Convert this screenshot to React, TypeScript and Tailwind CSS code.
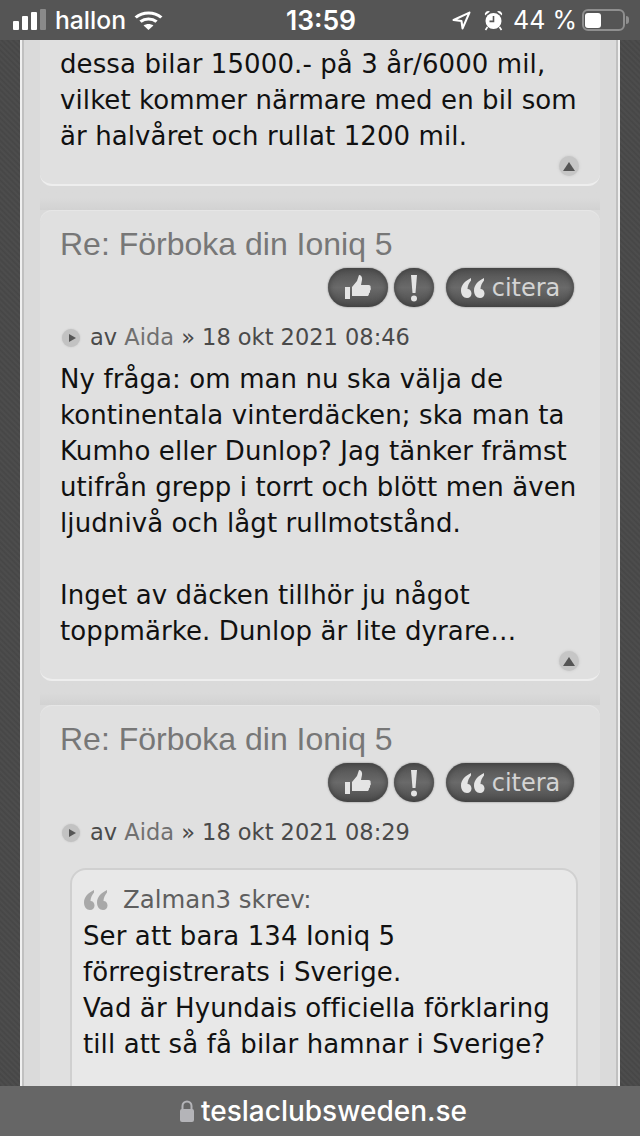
const body = "font-['DejaVu_Sans',sans-serif]";

function SignalBars() {
  return (
    <div className="flex items-end gap-[3px]">
      <span className="h-[9px] w-[6px] rounded-[1px] bg-white" />
      <span className="h-[14px] w-[6px] rounded-[1px] bg-white" />
      <span className="h-[18px] w-[6px] rounded-[1px] bg-white" />
      <span className="h-[21px] w-[6px] rounded-[1px] bg-[#8a8a8a]" />
    </div>
  );
}

function Wifi() {
  return (
    <svg width="29" height="20" viewBox="0 0 26 20" preserveAspectRatio="none" fill="none" stroke="white" strokeWidth="3">
      <path d="M1.5 7.5C8 1.5 18 1.5 24.5 7.5" />
      <path d="M5.8 11.6C10 8 16 8 20.2 11.6" />
      <path d="M13 20l-4.4-4.4c2.600-2 6.200-2 8.800 0z" fill="white" stroke="none" />
    </svg>
  );
}

function Location() {
  return (
    <svg width="19" height="19" viewBox="0 0 18 18" fill="none" stroke="white" strokeWidth="2" strokeLinejoin="round">
      <path d="M16.500 1.500L1.500 8.500L9 9.500L10 16.500Z" />
    </svg>
  );
}

function Alarm() {
  return (
    <svg width="19" height="22" viewBox="0 0 19 22">
      <circle cx="9.500" cy="12" r="8" fill="white" />
      <path d="M1 6.500a3.400 3.400 0 0 1 5-4zM18 6.500a3.400 3.400 0 0 0-5-4z" fill="white" />
      <path d="M9.500 7v5.400H5.500" fill="none" stroke="#555" strokeWidth="1.600" />
      <path d="M3.500 18l-2 3M15.500 18l2 3" stroke="white" strokeWidth="1.600" />
    </svg>
  );
}

function StatusBar() {
  return (
    <div className="relative z-10 grid h-10 shrink-0 grid-cols-[1fr_auto_1fr] items-center bg-[#555555] pl-[13px] pr-[11px] font-['Inter',sans-serif] text-white">
      <div className="flex items-center">
        <SignalBars />
        <span className="ml-[9px] text-[24.7px] font-medium leading-none">hallon</span>
        <span className="ml-[8px]">
          <Wifi />
        </span>
      </div>
      <span className="text-[26.5px] font-semibold leading-none">13:59</span>
      <div className="flex items-center justify-end">
        <Location />
        <span className="ml-[13px]">
          <Alarm />
        </span>
        <span className="ml-[10px] text-[25px] font-normal leading-none">44 %</span>
        <div className="ml-[5px] flex h-[22px] w-[43px] items-center rounded-[6px] border-2 border-[#8f8f8f] p-[1px]">
          <span className="h-[15px] w-[16px] rounded-[3px] bg-white" />
        </div>
        <span className="ml-[1px] h-[8px] w-[3px] rounded-r bg-[#8f8f8f]" />
      </div>
    </div>
  );
}

function UpArrow() {
  return (
    <div className="flex justify-end pr-[21px]">
      <div className="flex h-5 w-5 items-center justify-center rounded-full bg-[#c6c6c6] shadow-[0_0_3px_#c6c6c6]">
        <span className="h-0 w-0 border-x-[6px] border-b-[9px] border-x-transparent border-b-[#555555]" />
      </div>
    </div>
  );
}

function QuoteMarks({ fill }: { fill: string }) {
  return (
    <svg width="26" height="20" viewBox="0 0 26 20" fill={fill} className="blur-[0.4px]">
      <path d="M11 0C5 3 1 7 1 12.500 1 17 3.500 20 7 20c2.800 0 4.500-2 4.500-4.500S9.800 11 7.500 11c0-3 1.500-6 3.500-8.500z" />
      <path d="M24 0c-6 3-10 7-10 12.500 0 4.500 2.500 7.500 6 7.500 2.800 0 4.500-2 4.500-4.500S22.800 11 20.500 11c0-3 1.500-6 3.500-8.500z" />
    </svg>
  );
}

function PostButtons() {
  const pill =
    'flex h-[39px] items-center justify-center rounded-full bg-gradient-to-b from-[#505050] via-[#6a6a6a] to-[#4c4c4c] shadow-[inset_0_0_6px_#3a3a3a,0_0_2px_#777]';
  return (
    <div className="flex justify-end pr-[26px]">
      <div className={`${pill} w-[60px]`}>
        <svg width="28" height="28" viewBox="0 0 28 28" fill="#e4e4e4" className="blur-[0.4px]">
          <path d="M1 13h5v12H1z" />
          <path d="M8 13l5-6 2-6c2 0 3.500 2 3 5l-1 5h7.500c1.800 0 2.500 1.500 2 2.700.6 1 .4 2.300-.6 3 .4 1.100 0 2.300-1 2.800.2 1.300-.6 2.500-2 2.500H8z" />
        </svg>
      </div>
      <div className={`${pill} ml-[6px] w-[40px]`}>
        <svg width="8" height="28" viewBox="0 0 8 28" fill="#e4e4e4" className="blur-[0.4px]">
          <path d="M1 1h6l-1.500 18h-3z" />
          <circle cx="4" cy="24.500" r="3" />
        </svg>
      </div>
      <div className={`${pill} ml-3 w-[128px] gap-[6px]`}>
        <QuoteMarks fill="#e4e4e4" />
        <span className={`${body} text-[24px] font-medium leading-none text-[#d4d4d4]`}>citera</span>
      </div>
    </div>
  );
}

function PostHeader({ time }: { time: string }) {
  return (
    <>
      <h3 className="pl-5 pt-[15px] font-['Liberation_Sans',sans-serif] text-[32px] leading-[38px] text-[#777777]">
        Re: Förboka din Ioniq 5
      </h3>
      <div className="mt-[5px]">
        <PostButtons />
      </div>
      <div className="mt-[13px] flex h-9 items-center pl-[22px] text-[22.5px] text-[#4a4a4a]">
        <span className="flex h-[18px] w-[18px] items-center justify-center rounded-full bg-[#c2c2c2] shadow-[0_0_2px_#c2c2c2]">
          <span className="ml-[2px] h-0 w-0 border-y-[4px] border-l-[7px] border-y-transparent border-l-[#555555]" />
        </span>
        <span className="ml-[10px]">
          av <span className="text-[#707070]">Aida</span> » {time}
        </span>
      </div>
    </>
  );
}

function Post({ children }: { children: React.ReactNode }) {
  return (
    <article className={`${body} rounded-[12px] border-b-2 border-[#eeeeee] bg-[#e0e0e0] shadow-[inset_0_1px_0_#e6e6e6]`}>
      {children}
    </article>
  );
}

function PostGap() {
  return <div className="h-6 bg-gradient-to-b from-[#dadada] via-[#dadada] to-[#d2d2d2]" />;
}

function TextLines({ lines }: { lines: string[] }) {
  return (
    <>
      {lines.map((line, i) =>
        line === '' ? (
          <p key={i} className="h-9" />
        ) : (
          <p key={i} className="whitespace-nowrap">
            {line}
          </p>
        ),
      )}
    </>
  );
}

export default function App() {
  return (
    <div className="flex h-[1136px] w-[640px] flex-col overflow-hidden bg-[#4a4a4a] bg-[repeating-linear-gradient(45deg,#464646_0px,#4e4e4e_2px,#464646_4px)]">
      <StatusBar />
      <main className="min-h-0 flex-1 overflow-hidden px-5">
        <div className="-mt-[30px] border-x-2 border-[#f0f0f0]">
          <div className="border-x-2 border-[#c0c0c0] bg-[#dadada] px-4">
            <Post>
              <div className="px-5 text-[26px] leading-[36px] tracking-[0.1px] text-[#111111]">
                {/* only the tail of this scrolled-off line's comma shows under the status bar */}
                <p className="pl-[440px]">,</p>
                <TextLines
                  lines={[
                    'dessa bilar 15000.- på 3 år/6000 mil,',
                    'vilket kommer närmare med en bil som',
                    'är halvåret och rullat 1200 mil.',
                  ]}
                />
              </div>
              <div className="pb-[8px] pt-[2px]">
                <UpArrow />
              </div>
            </Post>
            <PostGap />
            <Post>
              <PostHeader time="18 okt 2021 08:46" />
              <div className="mt-[5px] px-5 text-[26px] leading-[36px] tracking-[0.1px] text-[#111111]">
                <TextLines
                  lines={[
                    'Ny fråga: om man nu ska välja de',
                    'kontinentala vinterdäcken; ska man ta',
                    'Kumho eller Dunlop? Jag tänker främst',
                    'utifrån grepp i torrt och blött men även',
                    'ljudnivå och lågt rullmotstånd.',
                    '',
                    'Inget av däcken tillhör ju något',
                    'toppmärke. Dunlop är lite dyrare…',
                  ]}
                />
              </div>
              <div className="pb-[8px] pt-[2px]">
                <UpArrow />
              </div>
            </Post>
            <PostGap />
            <Post>
              <PostHeader time="18 okt 2021 08:29" />
              <blockquote className="ml-[30px] mr-[22px] mt-[17px] rounded-t-[16px] border-2 border-[#d0d0d0] bg-[#e8e8e8] pb-10 pl-[11px] pt-[12px]">
                <div className="flex h-9 items-center text-[24.4px] text-[#5e5e5e]">
                  <QuoteMarks fill="#a8a8a8" />
                  <span className="ml-[14px]">Zalman3 skrev:</span>
                </div>
                <div className="text-[26px] leading-[36px] tracking-[0.1px] text-[#111111]">
                  <TextLines
                    lines={[
                      'Ser att bara 134 Ioniq 5',
                      'förregistrerats i Sverige.',
                      'Vad är Hyundais officiella förklaring',
                      'till att så få bilar hamnar i Sverige?',
                    ]}
                  />
                </div>
              </blockquote>
            </Post>
          </div>
        </div>
      </main>
      <footer className="relative z-10 flex h-[50px] shrink-0 items-center justify-center bg-[#666666] pl-[6px] font-['Inter',sans-serif]">
        <svg width="16" height="22" viewBox="0 0 16 22" className="mr-[6px]">
          <path d="M3.500 10V6a4.500 4.500 0 0 1 9 0v4" fill="none" stroke="#b4b4b8" strokeWidth="2" />
          <rect x="1" y="9" width="14" height="13" rx="2" fill="#b4b4b8" />
        </svg>
        <span className="text-[28px] font-medium leading-none text-white">teslaclubsweden.se</span>
      </footer>
    </div>
  );
}
